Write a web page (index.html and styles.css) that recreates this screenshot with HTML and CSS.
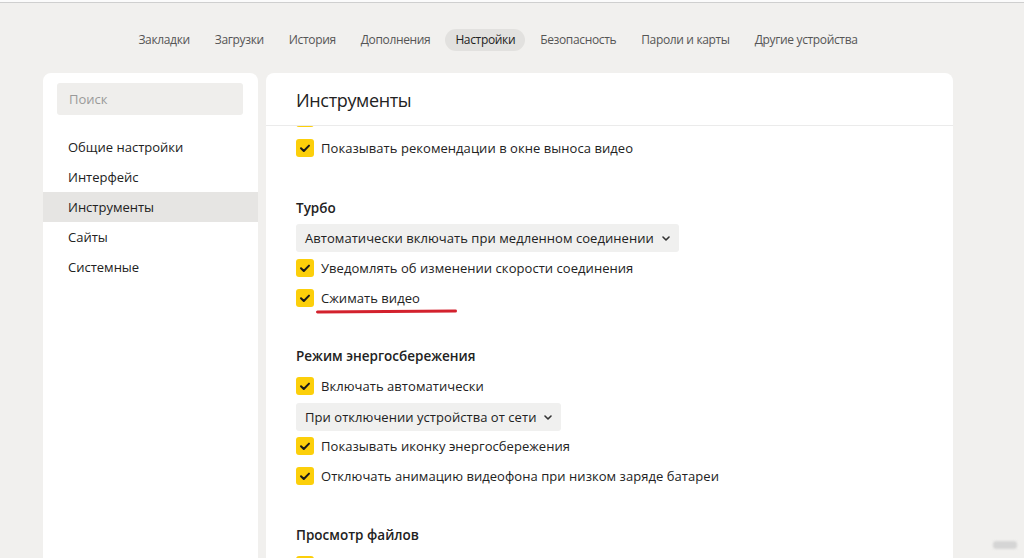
FILE: index.html
```html
<!DOCTYPE html>
<html lang="ru">
<head>
<meta charset="utf-8">
<title>Настройки</title>
<link rel="stylesheet" href="styles.css">
</head>
<body>
<div class="topstrip"></div>
<div class="page">
  <nav class="tabs">
    <span class="tab">Закладки</span>
    <span class="tab">Загрузки</span>
    <span class="tab">История</span>
    <span class="tab">Дополнения</span>
    <span class="tab active">Настройки</span>
    <span class="tab">Безопасность</span>
    <span class="tab">Пароли и карты</span>
    <span class="tab">Другие устройства</span>
  </nav>
  <div class="cols">
    <aside class="side">
      <div class="search">Поиск</div>
      <ul class="menu">
        <li>Общие настройки</li>
        <li>Интерфейс</li>
        <li class="current">Инструменты</li>
        <li>Сайты</li>
        <li>Системные</li>
      </ul>
    </aside>
    <main class="main">
      <header class="main-head">Инструменты</header>
      <div class="scroll">
        <div class="inner">
          <div class="row"><span class="cb"><svg viewBox="0 0 18 18"><path d="M5 9.2l2.8 2.8L13 6.6" /></svg></span></div>
          <div class="row"><span class="cb"><svg viewBox="0 0 18 18"><path d="M5 9.2l2.8 2.8L13 6.6" /></svg></span><span class="label">Показывать рекомендации в окне выноса видео</span></div>

          <h3 class="sect">Турбо</h3>
          <div class="select wide">Автоматически включать при медленном соединении <svg class="chev" viewBox="0 0 8 5"><path d="M1 1l3 3 3-3" /></svg></div>
          <div class="row tight"><span class="cb"><svg viewBox="0 0 18 18"><path d="M5 9.2l2.8 2.8L13 6.6" /></svg></span><span class="label">Уведомлять об изменении скорости соединения</span></div>
          <div class="row"><span class="cb"><svg viewBox="0 0 18 18"><path d="M5 9.2l2.8 2.8L13 6.6" /></svg></span><span class="label marked">Сжимать видео<span class="redline"></span></span></div>

          <h3 class="sect energy">Режим энергосбережения</h3>
          <div class="row"><span class="cb"><svg viewBox="0 0 18 18"><path d="M5 9.2l2.8 2.8L13 6.6" /></svg></span><span class="label">Включать автоматически</span></div>
          <div class="select small">При отключении устройства от сети <svg class="chev" viewBox="0 0 8 5"><path d="M1 1l3 3 3-3" /></svg></div>
          <div class="row"><span class="cb"><svg viewBox="0 0 18 18"><path d="M5 9.2l2.8 2.8L13 6.6" /></svg></span><span class="label">Показывать иконку энергосбережения</span></div>
          <div class="row"><span class="cb"><svg viewBox="0 0 18 18"><path d="M5 9.2l2.8 2.8L13 6.6" /></svg></span><span class="label">Отключать анимацию видеофона при низком заряде батареи</span></div>

          <h3 class="sect files">Просмотр файлов</h3>
          <div class="row"><span class="cb"><svg viewBox="0 0 18 18"><path d="M5 9.2l2.8 2.8L13 6.6" /></svg></span></div>
        </div>
      </div>
    </main>
  </div>
</div>
<div class="watermark"></div>
</body>
</html>
```

FILE: styles.css
```css
* { box-sizing: border-box; }
html, body {
  margin: 0;
  padding: 0;
  height: 558px;
  overflow: hidden;
}
body {
  background: #f1f0ee;
  font-family: "Open Sans", "Noto Sans", sans-serif;
  color: #222;
}
.topstrip {
  height: 3px;
  background: #fbfbfb;
  border-bottom: 1px solid #cfcfcf;
}
.page {
  width: 910px;
  margin-left: 43px;
}
.tabs {
  display: flex;
  justify-content: center;
  align-items: center;
  gap: 5px;
  height: 22px;
  margin-top: 26px;
  margin-bottom: 22px;
  font-size: 12px;
  color: #555;
  letter-spacing: -0.35px;
}
.tab {
  padding: 0 10px;
  height: 22px;
  line-height: 22px;
  border-radius: 11px;
}
.tab.active {
  background: #e2e1df;
  color: #222;
}
.cols {
  display: flex;
  gap: 8px;
  height: 490px;
}
.side {
  width: 215px;
  background: #fff;
  border-radius: 8px 8px 0 0;
  padding-top: 10px;
}
.search {
  margin: 0 15px 0 14px;
  height: 32px;
  line-height: 32px;
  padding-left: 12px;
  background: #efeeec;
  border-radius: 3px;
  font-size: 13px;
  color: #9a9a9a;
}
.menu {
  list-style: none;
  margin: 17px 0 0;
  padding: 0;
  font-size: 13px;
}
.menu li {
  height: 30px;
  line-height: 30px;
  padding-left: 25px;
  color: #222;
}
.menu li.current {
  background: #e6e5e3;
}
.main {
  width: 687px;
  background: #fff;
  border-radius: 8px 8px 0 0;
  display: flex;
  flex-direction: column;
}
.main-head {
  height: 53px;
  line-height: 55px;
  padding-left: 30px;
  font-size: 18px;
  color: #222;
  border-bottom: 1px solid #ebebeb;
  letter-spacing: -0.35px;
}
.scroll {
  flex: 1;
  overflow: hidden;
}
.inner {
  margin-top: -23px;
  padding-left: 30px;
  font-size: 13px;
}
.row {
  display: flex;
  align-items: center;
  height: 30px;
}
.row.tight { margin-top: 1px; }
.cb {
  width: 18px;
  height: 18px;
  border-radius: 3px;
  background: #fccf0a;
  flex: none;
  display: flex;
}
.cb svg {
  width: 18px;
  height: 18px;
  fill: none;
  stroke: #1a1a1a;
  stroke-width: 2;
  stroke-linecap: round;
  stroke-linejoin: round;
}
.label {
  margin-left: 7px;
  color: #222;
  letter-spacing: 0.05px;
}
.marked { position: relative; }
.redline {
  position: absolute;
  left: -5px;
  right: -37px;
  bottom: -6px;
  height: 3px;
  background: #d3212d;
  border-radius: 2px;
  transform: rotate(-0.4deg);
}
.sect {
  margin: 35px 0 5px;
  height: 20px;
  line-height: 20px;
  font-size: 13.5px;
  font-weight: 600;
  color: #222;
}
.sect.energy { margin-top: 33px; }
.sect.files { margin-top: 34px; }
.select {
  display: inline-flex;
  align-items: center;
  height: 28px;
  padding: 0 9px;
  background: #f0f0ef;
  border-radius: 3px;
  color: #222;
  letter-spacing: 0.05px;
}
.select.wide { margin-top: 1px; }
.select.small { margin-top: 2px; }
.chev {
  width: 8px;
  height: 5px;
  margin-left: 8px;
  fill: none;
  stroke: #333;
  stroke-width: 1.6;
  stroke-linecap: round;
  stroke-linejoin: round;
}
.watermark {
  position: absolute;
  left: 993px;
  top: 541px;
  width: 24px;
  height: 8px;
  background: #cfcfcf;
  border-radius: 3px;
  filter: blur(1px);
  opacity: 0.8;
}
```
